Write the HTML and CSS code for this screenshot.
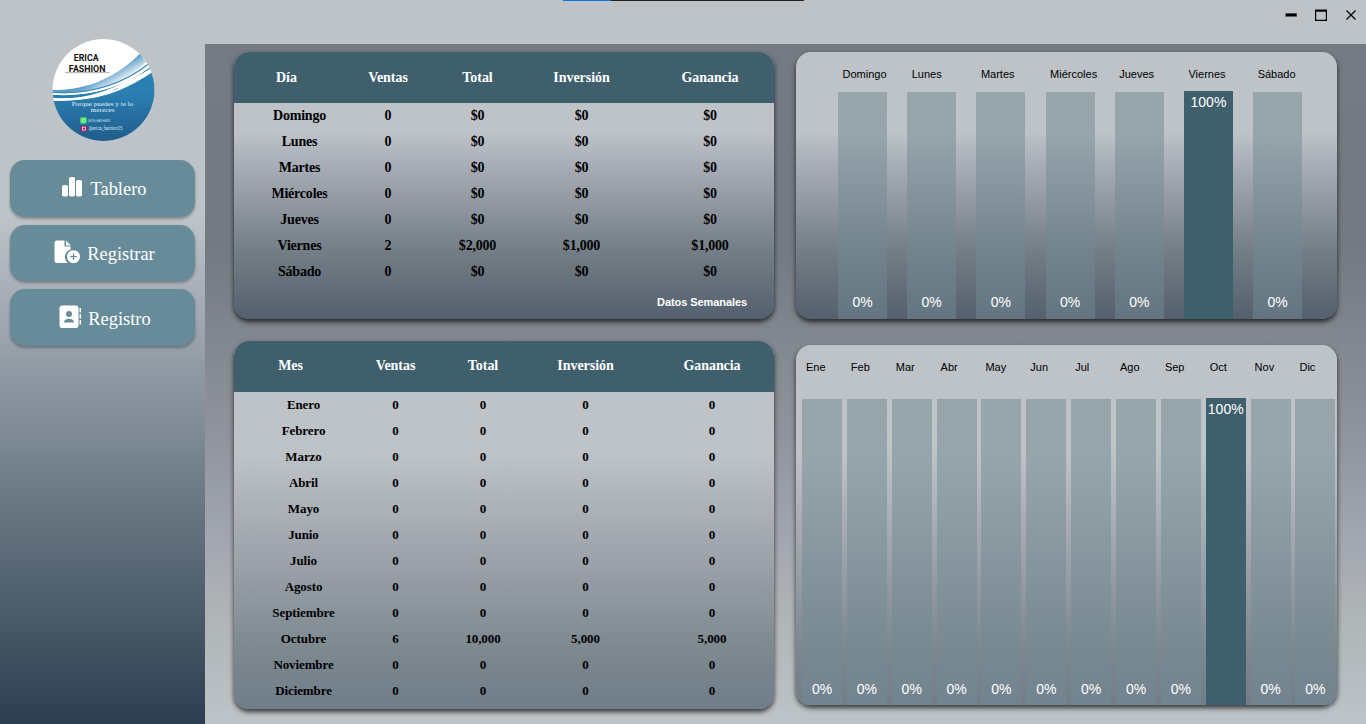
FILE: index.html
```html
<!DOCTYPE html>
<html lang="es">
<head>
<meta charset="utf-8">
<title>Erica Fashion</title>
<link rel="stylesheet" href="styles.css">
</head>
<body>
<div class="app">
  <div class="top-strip"></div>
  <header class="titlebar">
    <svg width="12" height="12" viewBox="0 0 12 12"><path d="M0 4h12v4H0z" fill="#777b7d"/><path d="M1 4.600h10.500v2.600H1z"/></svg>
    <svg width="12" height="12" viewBox="0 0 12 12"><path d="M.6 2h10.8M.6 1v10.3h10.8V1" fill="none" stroke="#000" stroke-width="1.2"/><path d="M0 .5h12v2H0z"/></svg>
    <svg width="12" height="12" viewBox="0 0 12 12"><path d="M1.5 1.5l9 9M10.500 1.500l-9 9" fill="none" stroke="#000" stroke-width="1.200"/></svg>
  </header>
  <aside class="sidebar">
    <svg class="logo" width="103" height="104" viewBox="0 0 104 104">
      <defs>
        <clipPath id="disc"><circle cx="52" cy="52" r="51.500"/></clipPath>
        <linearGradient id="sea" x1="0" y1="0" x2="0" y2="1"><stop offset=".3" stop-color="#2a80b2"/><stop offset="1" stop-color="#1f5c8c"/></linearGradient>
        <linearGradient id="foam" gradientUnits="userSpaceOnUse" x1="58" y1="34" x2="66" y2="48"><stop offset="0" stop-color="#5f9fc8"/><stop offset="1" stop-color="#fff"/></linearGradient>
      </defs>
      <g clip-path="url(#disc)">
        <path d="M0 0h104v104H0z" fill="#fff"/>
        <path d="M0 61C42 66 74 53 104 32v72H0z" fill="url(#sea)"/>
        <path d="M0 52C36 53 67 38 89 15l6 9C72 45 44 56 0 54z" fill="url(#foam)"/>
        <path d="M0 54.500C44 57 74 44 97 26" fill="none" stroke="#3d89b8" stroke-width="1.300"/>
        <path d="M0 58C34 61 58 52 66 49" fill="none" stroke="#2a7fb1" stroke-width="3.500"/>
        <path d="M0 56C44 59 74 47 98 28" fill="none" stroke="#fff" stroke-width="1.500"/>
        <path d="M40 56C66 50 84 42 104 26" fill="none" stroke="#3d89b8" stroke-width="1.200"/>
        <path d="M0 61.500C42 64 66 50 104 30" fill="none" stroke="#fff" stroke-width="2.500"/>
      </g>
      <path d="M13 34.500h45" stroke="#999" stroke-width=".8"/>
      <g class="logo-name"><text x="22" y="22.500" textLength="25" lengthAdjust="spacingAndGlyphs">ERICA</text><text x="17" y="34" textLength="37" lengthAdjust="spacingAndGlyphs">FASHION</text></g>
      <g class="logo-motto"><text x="20" y="68" textLength="62">Porque puedes y te lo</text><text x="39" y="74" textLength="24">mereces</text></g>
      <rect x="28.500" y="79.500" width="6.500" height="6.500" rx="1" fill="#43dc60"/><circle cx="31.800" cy="82.700" r="1.700" fill="none" stroke="#d9ffe0" stroke-width=".8"/>
      <rect x="29" y="88" width="6.500" height="6" rx="1" fill="#a51c67"/><rect x="30.700" y="89.500" width="3" height="3" fill="none" stroke="#fff" stroke-width=".7"/>
      <g class="logo-contact"><text x="36" y="84.500" textLength="23" lengthAdjust="spacingAndGlyphs">(829)-880-6800</text><text class="handle" x="37" y="92.500" textLength="34" lengthAdjust="spacingAndGlyphs">@erica_fashion25</text></g>
    </svg>
    <nav class="menu">
      <a class="menu-item dashboard"><svg width="22" height="22" viewBox="0 0 22 22" fill="#fff"><rect x="1" y="9" width="6" height="11.500" rx="1.800"/><rect x="8" y="1" width="6" height="19.500" rx="1.800"/><rect x="15" y="4" width="6" height="16.500" rx="1.800"/></svg><span>Tablero</span></a>
      <a class="menu-item register"><svg width="27" height="24" viewBox="0 0 27 24"><path d="M3 .5h7.500v6h6v3.300a7.500 7.500 0 0 0-2.800 13.200H3a2.500 2.500 0 0 1-2.500-2.500V3A2.500 2.500 0 0 1 3 .5zM12 .5l5 5h-5z" fill="#fff"/><circle cx="19.500" cy="16.700" r="6.500" fill="#fff"/><path d="M19.500 13.500v6.400M16.300 16.700h6.400" stroke="#688b99" stroke-width="1.300"/></svg><span>Registrar</span></a>
      <a class="menu-item records"><svg width="23" height="24" viewBox="0 0 23 24"><rect x=".5" y=".5" width="19" height="22.500" rx="2.800" fill="#fff"/><circle cx="10" cy="9" r="3" fill="#688b99"/><path d="M5 17.500c0-5 10-5 10 0z" fill="#688b99"/><path d="M21.300 3v4.500M21.300 9v4.500M21.300 15v4.500" stroke="#fff" stroke-width="1.500"/></svg><span>Registro</span></a>
    </nav>
  </aside>
  <main class="board">
    <section class="card table-card week">
      <table>
        <colgroup><col class="c1"><col class="c2"><col class="c3"><col class="c4"><col class="c5"></colgroup>
        <thead><tr><th>Día</th><th>Ventas</th><th>Total</th><th>Inversión</th><th>Ganancia</th></tr></thead>
        <tbody id="week-rows"></tbody>
      </table>
      <p class="caption">Datos Semanales</p>
    </section>
    <section class="card chart week-chart" id="week-chart"></section>
    <section class="card table-card year">
      <table>
        <colgroup><col class="c1"><col class="c2"><col class="c3"><col class="c4"><col class="c5"></colgroup>
        <thead><tr><th>Mes</th><th>Ventas</th><th>Total</th><th>Inversión</th><th>Ganancia</th></tr></thead>
        <tbody id="year-rows"></tbody>
      </table>
    </section>
    <section class="card chart year-chart" id="year-chart"></section>
  </main>
</div>
<script src="app.js"></script>
</body>
</html>
```
FILE: styles.css
```css
* { box-sizing: border-box; }
body { margin: 0; overflow: hidden; font-family: "Liberation Serif", "Times New Roman", serif; }
.app {
  position: relative;
  display: grid;
  grid-template: 44px 680px / 205px 1161px;
  width: 1366px;
  height: 724px;
  background: linear-gradient(#bdc3c7 0%, #bdc3c7 30%, #a9afb9 40%, #75828c 64%, #2c3e50 100%);
}
.top-strip { position: absolute; left: 563px; top: 0; width: 241px; height: 1px; background: linear-gradient(90deg, #0878d8 48px, #202124 48px); }
.titlebar { grid-column: 2; display: flex; justify-content: flex-end; gap: 18px; padding: 9px 9px 0 0; background: #bdc3c7; }
.sidebar { grid-column: 1; grid-row: 1 / 3; padding: 38px 10px 0; }
.logo { display: block; margin: 0 0 18px 42px; }
.logo-name { font: bold 9.5px Roboto, sans-serif; fill: #111; }
.logo-motto { font: 7px "Liberation Serif", serif; fill: #e6f1f8; }
.logo-contact { font: 4px Roboto, sans-serif; fill: #cfe4f0; }
.handle { font-size: 5px; }
.menu { display: flex; flex-direction: column; gap: 8px; }
.menu-item {
  display: flex; align-items: center; justify-content: center; gap: 7px;
  height: 57px; padding-left: 2px; border-radius: 15px; background: #688b99; color: #fff;
  font-size: 18.4px; box-shadow: 0 2px 3px rgba(0,0,0,.3);
}
.register { height: 56px; gap: 5px; padding: 2px 0 0 4px; }
.records { gap: 5px; padding: 2px 0 0 5px; }
.menu-item svg { margin-bottom: 4px; }
.menu-item span { padding: 1px 0 0 1px; }
.board {
  grid-column: 2; grid-row: 2;
  display: grid; grid-template-columns: 540px 541px; grid-template-rows: 268px 369px;
  gap: 21px 22px; padding: 8px 0 0 29px; align-items: start;
  background: linear-gradient(#757a83 0%, #737a82 30%, #8f939c 57%, #a5a9b2 75%, #adb2b5 82%, #bdc3c7 100%);
}
.card { border-radius: 15px; box-shadow: 0 3px 5px rgba(0,0,0,.7); }
.week, .week-chart { height: 267px; background: linear-gradient(#bdc3c7 0%, #bdc3c7 30%, #aaafb9 41%, #737d85 75%, #54606e 100%); }
.year, .year-chart { background: linear-gradient(#bdc3c7 0%, #bdc3c7 30%, #a5aab2 52%, #7c878e 85%, #717e8a 100%); }
.table-card { overflow: hidden; }
.year { height: 368px; }
table { width: 540px; border-collapse: collapse; table-layout: fixed; text-align: center; font-weight: bold; font-size: 14px; letter-spacing: -.2px; }
th, td { padding: 0; }
th { height: 51px; color: #fff; background: #405f6c; letter-spacing: -.05px; }
td { height: 26px; }
.year td { font-size: 13px; letter-spacing: -.1px; }
.year th { padding-bottom: 2px; }
th:first-child { padding-right: 26px; }
th:last-child, td:last-child { padding-left: 27px; }
.week .c1 { width: 131px; } .week .c2 { width: 46px; } .week .c3 { width: 133px; } .week .c4 { width: 75px; } .week .c5 { width: 155px; }
.year .c1 { width: 139px; } .year .c2 { width: 45px; } .year .c3 { width: 130px; } .year .c4 { width: 75px; } .year .c5 { width: 151px; }
.caption { margin: 11px 27px 0 0; text-align: right; color: #fff; font: bold 11px "Liberation Sans", Arial, sans-serif; letter-spacing: -.08px; }
.chart { display: flex; font-family: "Liberation Sans", Arial, sans-serif; }
.week-chart { padding-left: 42px; gap: 20.200px; }
.column { display: flex; flex-direction: column; }
.week-chart .column { width: 49px; }
.label { height: 40px; padding: 16px 0 0 4.500px; font-size: 11px; line-height: 13px; white-space: nowrap; }
.bar { flex: 1; display: flex; align-items: flex-end; justify-content: center; padding-bottom: 9px; background: linear-gradient(rgba(113,136,143,.5), rgba(115,138,150,.5)); color: #fff; font-size: 14px; line-height: 16px; }
.full .bar { align-items: flex-start; padding: 3px 0 0; margin-top: -1px; background: #405f6c; }
.year-chart { height: 360px; margin-top: 4px; padding-left: 6px; gap: 4.870px; }
.year-chart .column { width: 40px; }
.year-chart .label { height: 54px; padding-left: 4px; }
.year-chart .bar { padding-bottom: 8px; }
.year-chart .full .bar { padding-bottom: 0; }
```
FILE: app.js
```js
const days = ['Domingo', 'Lunes', 'Martes', 'Miércoles', 'Jueves', 'Viernes', 'Sábado'];
const months = ['Enero', 'Febrero', 'Marzo', 'Abril', 'Mayo', 'Junio', 'Julio', 'Agosto', 'Septiembre', 'Octubre', 'Noviembre', 'Diciembre'];

function fillRows(id, names, empty, active, values) {
  document.getElementById(id).innerHTML = names.map(name => {
    const cells = name === active ? values : empty;
    return `<tr><td>${name}</td>${cells.map(c => `<td>${c}</td>`).join('')}</tr>`;
  }).join('');
}
function fillChart(id, labels, active) {
  document.getElementById(id).innerHTML = labels.map(label =>
    `<div class="column${label === active ? ' full' : ''}"><div class="label">${label}</div><div class="bar">${label === active ? '100%' : '0%'}</div></div>`
  ).join('');
}
fillRows('week-rows', days, ['0', '$0', '$0', '$0'], 'Viernes', ['2', '$2,000', '$1,000', '$1,000']);
fillRows('year-rows', months, ['0', '0', '0', '0'], 'Octubre', ['6', '10,000', '5,000', '5,000']);
fillChart('week-chart', days, 'Viernes');
fillChart('year-chart', months.map(m => m.slice(0, 3)), 'Oct');
```
